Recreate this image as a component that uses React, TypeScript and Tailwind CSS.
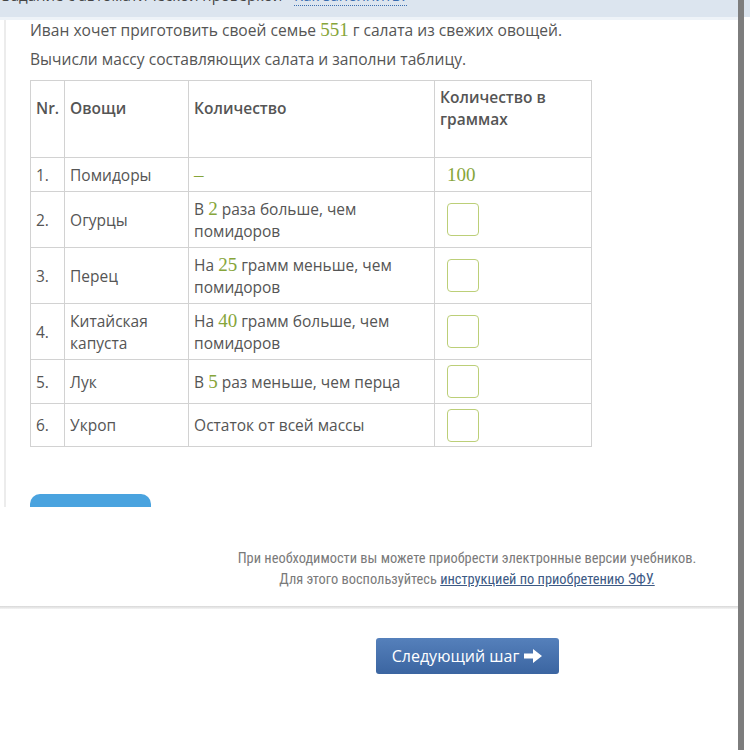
import React from "react";

const G = ({ children }: { children: React.ReactNode }) => (
  <span className="text-[#86a53a] text-[19px] leading-[1]" style={{ fontFamily: '"Liberation Serif", serif' }}>{children}</span>
);

const Box = () => (
  <div className="w-[32px] h-[33px] border border-[#bccf78] rounded-[4px] bg-white" />
);

type Row = { n: string; veg: React.ReactNode; qty: React.ReactNode; ans: React.ReactNode; h: string };

const rows: Row[] = [
  { n: "1.", veg: "Помидоры", qty: <G>–</G>, ans: <G>100</G>, h: "h-[34px]" },
  { n: "2.", veg: "Огурцы", qty: <>В <G>2</G> раза больше, чем помидоров</>, ans: <Box />, h: "h-[56px]" },
  { n: "3.", veg: "Перец", qty: <>На <G>25</G> грамм меньше, чем помидоров</>, ans: <Box />, h: "h-[56px]" },
  { n: "4.", veg: <>Китайская капуста</>, qty: <>На <G>40</G> грамм больше, чем помидоров</>, ans: <Box />, h: "h-[56px]" },
  { n: "5.", veg: "Лук", qty: <>В <G>5</G> раз меньше, чем перца</>, ans: <Box />, h: "h-[44px]" },
  { n: "6.", veg: "Укроп", qty: "Остаток от всей массы", ans: <Box />, h: "h-[43px]" },
];

export default function App() {
  return (
    <div className="relative w-[750px] h-[750px] bg-white overflow-hidden" style={{ fontFamily: '"Open Sans", sans-serif' }}>
      {/* scrollbar */}
      <div className="absolute left-[738px] top-0 w-[6px] h-[750px] bg-[#7d7d7d]" />
      {/* top band */}
      <div className="h-[17px] bg-[#dce5ef] overflow-hidden">
        <div className="-mt-[16px] text-[15px] text-[#444] whitespace-nowrap pl-[2px]">
          Задание с автоматической проверкой · <span className="text-[#3a6db0] border-b border-dotted border-[#3a6db0]">Как заполнить?</span>
        </div>
      </div>
      <div className="h-[3px] bg-[#eef3f8] w-[738px]" />
      {/* card */}
      <div className="w-[738px] h-[487px] overflow-hidden ml-[4px] border-l-2 border-[#ececec] text-[#555] text-[15.6px]">
        <div className="pl-[24px]">
          <p className="leading-[16px]">Иван хочет приготовить своей семье <G>551</G> г салата из свежих овощей.</p>
          <p className="leading-[22px] mt-[9px]">Вычисли массу составляющих салата и заполни таблицу.</p>
          <table className="mt-[10px] border-collapse border border-[#d2d2d2] leading-[22px] text-[15.5px]">
            <colgroup>
              <col className="w-[33px]" />
              <col className="w-[124px]" />
              <col className="w-[246px]" />
              <col className="w-[157px]" />
            </colgroup>
            <thead>
              <tr className="h-[77px] font-semibold">
                <th className="border border-[#d2d2d2] text-left align-top pt-[16px] px-[5px] font-semibold">Nr.</th>
                <th className="border border-[#d2d2d2] text-left align-top pt-[16px] px-[5px] font-semibold">Овощи</th>
                <th className="border border-[#d2d2d2] text-left align-top pt-[16px] px-[5px] font-semibold">Количество</th>
                <th className="border border-[#d2d2d2] text-left align-top pt-[5px] px-[5px] font-semibold">Количество в граммах</th>
              </tr>
            </thead>
            <tbody>
              {rows.map((r) => (
                <tr key={r.n} className={r.h}>
                  <td className="border border-[#d2d2d2] px-[5px] align-middle">{r.n}</td>
                  <td className="border border-[#d2d2d2] px-[5px] align-middle">{r.veg}</td>
                  <td className="border border-[#d2d2d2] px-[5px] pr-[20px] align-middle">{r.qty}</td>
                  <td className="border border-[#d2d2d2] px-[12px] align-middle">{r.ans}</td>
                </tr>
              ))}
            </tbody>
          </table>
          <div className="mt-[47px] w-[121px] h-[40px] bg-[#4aa3df] rounded-[10px]" />
        </div>
      </div>
      {/* footer */}
      <div className="w-[738px] pt-[41px] pb-[16px] pl-[196px] text-center text-[14.4px] text-[#7a7a7a] leading-[21px]" style={{ fontFamily: '"Liberation Sans Narrow", "Roboto Condensed", "Liberation Sans", sans-serif' }}>
        <p>При необходимости вы можете приобрести электронные версии учебников.</p>
        <p>Для этого воспользуйтесь <span className="text-[#3d5a85] underline">инструкцией по приобретению ЭФУ.</span></p>
      </div>
      <div className="w-[738px] h-[3px] bg-gradient-to-b from-[#d8d8d8] to-[#f4f4f4]" />
      <div className="w-[738px] flex justify-center pt-[29px] pl-[196px]">
        <div className="w-[183px] h-[36px] rounded-[3px] bg-gradient-to-b from-[#5580bb] to-[#3b65a1] text-white text-[16px] flex items-center justify-center gap-[5px]">
          <span>Следующий шаг</span>
          <svg width="18" height="14" viewBox="0 0 18 14"><path d="M0 4.5h9V0l9 7-9 7V9.5H0z" fill="white" /></svg>
        </div>
      </div>
    </div>
  );
}
